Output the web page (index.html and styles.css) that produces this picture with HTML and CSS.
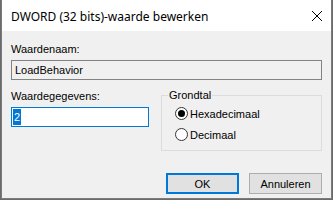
FILE: index.html
```html
<!DOCTYPE html>
<html lang="nl">
<head>
    <meta charset="UTF-8">
    <title>DWORD (32 bits)-waarde bewerken</title>
    <link rel="stylesheet" href="styles.css">
</head>
<body>
    <div class="dialog">
        <div class="titlebar">
            <span class="title">DWORD (32 bits)-waarde bewerken</span>
            <svg class="close" width="10" height="10" viewBox="0 0 10 10">
                <path d="M0 0 L10 10 M10 0 L0 10" stroke="#000" stroke-width="1" fill="none"/>
            </svg>
        </div>
        <div class="content">
            <label class="label">Waardenaam:</label>
            <div class="readonly">LoadBehavior</div>

            <div class="middle">
                <div class="data">
                    <label class="label">Waardegegevens:</label>
                    <div class="input"><span class="sel">2</span></div>
                </div>
                <fieldset class="group">
                    <legend>Grondtal</legend>
                    <div class="radio"><span class="dot checked"></span>Hexadecimaal</div>
                    <div class="radio"><span class="dot"></span>Decimaal</div>
                </fieldset>
            </div>

            <div class="buttons">
                <button class="btn default">OK</button>
                <button class="btn">Annuleren</button>
            </div>
        </div>
    </div>
</body>
</html>
```

FILE: styles.css
```css
body {
    margin: 0;
    padding: 0;
    background: #6b6b6b;
    font-family: 'Liberation Sans', Arial, sans-serif;
    font-size: 11px;
    color: #000;
}

.dialog {
    margin-left: 1px;
    width: 329px;
    height: 198px;
    border: 1px solid #7a7a7a;
    border-top: none;
    background: #f0f0f0;
}

.titlebar {
    height: 31px;
    background: #fff;
    display: flex;
    align-items: center;
    justify-content: space-between;
    padding: 0 9px 0 9px;
}

.title {
    font-family: 'Noto Sans', sans-serif;
    font-size: 12px;
    padding-top: 2px;
}

.close {
    margin-top: 1px;
}

.content {
    padding: 12px 9px 0 9px;
}

.label {
    display: block;
    line-height: 13px;
}

.readonly {
    margin-top: 4px;
    height: 18px;
    border: 1px solid #838383;
    line-height: 18px;
    padding-left: 3px;
}

.middle {
    display: flex;
    align-items: flex-start;
    gap: 12px;
    margin-top: 8px;
}

.data {
    width: 138px;
    padding-top: 2px;
}

.input {
    margin-top: 4px;
    border: 1px solid #0078d7;
    background: #fff;
    padding: 1px 0 0 1px;
    box-sizing: border-box;
    height: 20px;
}

.sel {
    display: inline-block;
    background: #0078d7;
    color: #fff;
    line-height: 16px;
    padding: 0 1px;
}

.group {
    flex: 1;
    margin: 1px 0 0 0;
    padding: 1px 0 0 13px;
    border: 1px solid #dcdcdc;
    height: 62px;
    box-sizing: border-box;
}

.group legend {
    padding: 0 1px;
    margin-left: -7px;
    line-height: 13px;
}

.radio {
    display: flex;
    align-items: center;
    height: 21px;
}

.dot {
    width: 11px;
    height: 11px;
    border: 1px solid #333;
    border-radius: 50%;
    background: #fff;
    margin-right: 2px;
    position: relative;
}

.dot.checked::after {
    content: '';
    position: absolute;
    left: 2px;
    top: 2px;
    width: 7px;
    height: 7px;
    border-radius: 50%;
    background: #000;
}

.buttons {
    display: flex;
    justify-content: flex-end;
    gap: 10px;
    margin-top: 22px;
}

.btn {
    width: 73px;
    height: 21px;
    margin: 0;
    padding: 0;
    background: #e1e1e1;
    border: 1px solid #adadad;
    font-family: 'Liberation Sans', Arial, sans-serif;
    font-size: 11px;
    color: #000;
}

.btn.default {
    border: 2px solid #0078d7;
}
```
